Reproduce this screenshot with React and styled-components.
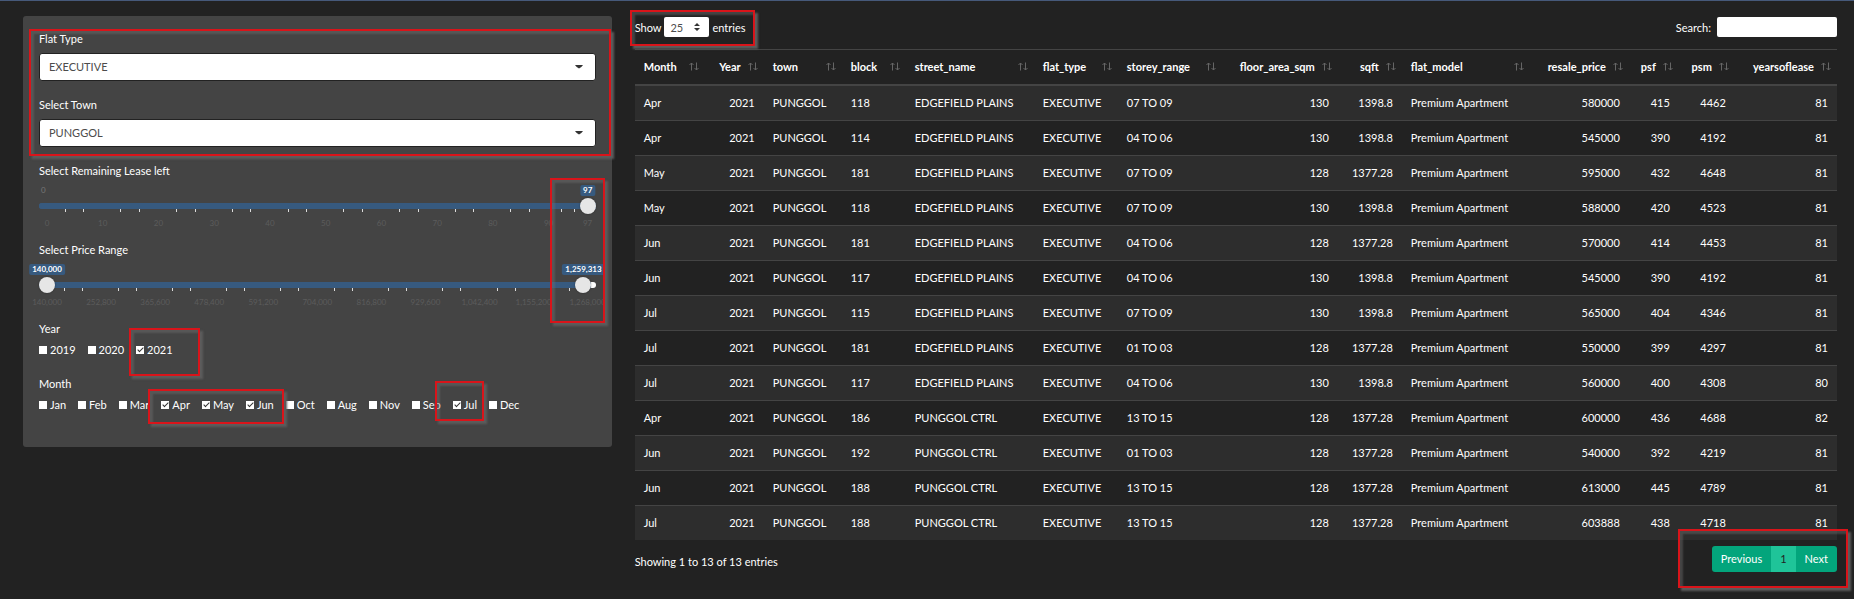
import React, { useId, useState } from "react";
import styled, { createGlobalStyle, css } from "styled-components";

const GlobalStyle = createGlobalStyle`
  *, *::before, *::after { box-sizing: border-box; }
  body {
    margin: 0;
    background: #222;
    color: #fff;
    font: 11px/17px Lato, "Liberation Sans", sans-serif;
  }
  input, select, button { font: inherit; }
`;

const Page = styled.div`
  border-top: 1px solid #46597a;
  padding: 15px 5px 26px 11px;
  display: grid;
  grid-template-columns: 1fr 2fr;
  align-items: start;
`;

const Column = styled.div`
  min-width: 0;
  padding: 0 12px;
`;

const MainColumn = styled(Column)`
  padding-left: 11px;
`;

const Sidebar = styled.form`
  background: #444;
  border-radius: 3px;
  padding: 14px 16px 17px;
`;

const Marked = styled.div`
  position: relative;
`;

const Mark = styled.span`
  position: absolute;
  z-index: 3;
  inset: ${(p) => p.$inset};
  border: 2px solid #d9141a;
  box-shadow: 3px 3px 2px #5c5c5c, inset 3px 3px 2px rgba(110, 110, 110, 0.45);
  pointer-events: none;
`;

const Field = styled.div`
  display: flex;
  flex-direction: column;
  gap: 6px;
  padding-bottom: 15px;
`;

const FieldLabel = styled.label`
  display: block;
`;

const SelectBox = styled.div`
  position: relative;
  display: flex;
`;

const Picker = styled.select`
  appearance: none;
  flex: 1;
  min-width: 0;
  height: 28px;
  padding: 0 24px 1px 9px;
  border: 1px solid #222;
  border-radius: 3px;
  background: #fff;
  color: #4c4c4c;
`;

const Caret = styled.svg`
  position: absolute;
  right: 13px;
  top: 12px;
  pointer-events: none;
`;

const SliderField = styled.div`
  padding-bottom: 13px;
`;

const TagRow = styled.div`
  position: relative;
  height: 11px;
  margin: 6px 8px 7px;
  font-size: 8px;
  line-height: 11px;
`;

const Tag = styled.output`
  position: absolute;
  transform: translateX(-50%);
  padding: 0 3px;
  border-radius: 2px;
  background: #375a7f;
  font-weight: 700;
  white-space: nowrap;
`;

const MinText = styled.span`
  color: #777;
  position: absolute;
  left: -6px;
`;

const Track = styled.div`
  position: relative;
  height: 6px;
  border-radius: 3px;
  background: linear-gradient(to right, #375a7f 50%, #fff 50%);
`;

const Fill = styled.div`
  height: 6px;
  border-radius: 3px 0 0 3px;
  background: #375a7f;
`;

const thumb = css`
  appearance: none;
  width: 16px;
  height: 16px;
  border: 0;
  border-radius: 50%;
  background: #e6e6e6;
  box-shadow: 0 0 2px rgba(0, 0, 0, 0.4);
  pointer-events: auto;
`;

const Range = styled.input`
  appearance: none;
  position: absolute;
  left: 0;
  top: -5px;
  width: 100%;
  height: 16px;
  margin: 0;
  background: none;
  pointer-events: none;
  &::-webkit-slider-thumb { ${thumb} }
  &::-moz-range-thumb { ${thumb} }
`;

const Scale = styled.div`
  display: flex;
  margin: 0 8px;
`;

const Segment = styled.div`
  flex: ${(p) => p.$span} 0 0;
  min-width: 0;
`;

const Ticks = styled.div`
  display: grid;
  grid-template-columns: repeat(3, 1fr);
  height: 3px;
  margin-bottom: 6px;
`;

const Tick = styled.i`
  border-right: 1px solid ${(p) => (p.$on ? "#ddd" : "transparent")};
`;

const ScaleText = styled.div`
  display: flex;
  justify-content: center;
  width: 0;
  font-size: 8px;
  line-height: 10px;
  color: #5c5c5c;
  white-space: nowrap;
`;

const Group = styled.fieldset`
  border: 0;
  margin: 0;
  min-width: 0;
  padding: 0 0 17px;
`;

const Legend = styled.legend`
  padding: 0;
  margin-bottom: 4px;
`;

const Choices = styled.div`
  display: flex;
  flex-wrap: wrap;
  column-gap: 12px;
`;

const Choice = styled.label`
  display: flex;
  align-items: center;
  gap: 3px;
`;

const ChoiceRun = styled(Choices)`
  position: relative;
`;

const Check = styled.input`
  appearance: none;
  position: relative;
  width: 8px;
  height: 8px;
  margin: 0;
  background: #fff;
  &:checked::after {
    content: "";
    position: absolute;
    left: 3px;
    top: 0;
    width: 3px;
    height: 6px;
    border: solid #333;
    border-width: 0 1px 1px 0;
    transform: rotate(45deg);
  }
`;

const Bar = styled.div`
  display: flex;
  justify-content: space-between;
  align-items: center;
`;

const TopBar = styled(Bar)`
  padding: 1px 0 12px;
`;

const FootBar = styled(Bar)`
  padding-top: 6px;
`;

const TableInfo = styled.span`
  padding-top: 4px;
`;

const InlineLabel = styled.label`
  position: relative;
  display: flex;
  align-items: center;
  gap: ${(p) => p.$gap}px;
`;

const LengthBox = styled.span`
  position: relative;
  display: flex;
`;

const LengthSelect = styled.select`
  appearance: none;
  width: 45px;
  height: 20px;
  padding: 0 0 0 6px;
  border: 0;
  border-radius: 2px;
  background: #fff;
  color: #4c4c4c;
`;

const LengthArrows = styled.svg`
  position: absolute;
  right: 9px;
  top: 6px;
  pointer-events: none;
`;

const SearchInput = styled.input`
  width: 120px;
  height: 20px;
  padding: 0 6px;
  border: 0;
  border-radius: 2px;
  background: #fff;
  color: #444;
`;

const Table = styled.table`
  width: 100%;
  table-layout: fixed;
  border-collapse: separate;
  border-spacing: 0;
`;

const Col = styled.col`
  width: ${(p) => p.$w}px;
`;

const Th = styled.th`
  position: relative;
  padding: 8px 23px 9px 9px;
  border: solid #444;
  border-width: 1px 0;
  text-align: ${(p) => (p.$num ? "right" : "left")};
  font-weight: 700;
  white-space: nowrap;
`;

const SortIcon = styled.svg`
  position: absolute;
  right: 6px;
  top: 12px;
`;

const Tr = styled.tr`
  &:nth-child(odd) { background: #2d2d2d; }
`;

const Td = styled.td`
  padding: 8px 9px 9px;
  border-top: 1px solid #444;
  text-align: ${(p) => (p.$num ? "right" : "left")};
  white-space: nowrap;
`;

const Pager = styled.nav`
  position: relative;
  display: flex;
`;

const PageButton = styled.button`
  height: 26px;
  padding: 0 9px 1px;
  border: 0;
  background: ${(p) => (p.$active ? "#1fc499" : "#03a57c")};
  color: ${(p) => (p.$active ? "#222" : "#fff")};
  &:first-of-type { border-radius: 3px 0 0 3px; }
  &:last-of-type { border-radius: 0 3px 3px 0; }
`;

const COLUMNS = [
  { name: "Month", w: 70 },
  { name: "Year", w: 59, num: true },
  { name: "town", w: 78 },
  { name: "block", w: 64 },
  { name: "street_name", w: 128 },
  { name: "flat_type", w: 84 },
  { name: "storey_range", w: 104 },
  { name: "floor_area_sqm", w: 116, num: true },
  { name: "sqft", w: 64, num: true },
  { name: "flat_model", w: 128 },
  { name: "resale_price", w: 99, num: true },
  { name: "psf", w: 50, num: true },
  { name: "psm", w: 56, num: true },
  { name: "yearsoflease", w: 102, num: true },
];

const EP = "EDGEFIELD PLAINS";
const PC = "PUNGGOL CTRL";
const row = (month, block, street, storey, area, price, psf, psm, lease) => [
  month, 2021, "PUNGGOL", block, street, "EXECUTIVE", storey, area,
  area === 130 ? "1398.8" : "1377.28", "Premium Apartment", price, psf, psm, lease,
];

const ROWS = [
  row("Apr", "118", EP, "07 TO 09", 130, 580000, 415, 4462, 81),
  row("Apr", "114", EP, "04 TO 06", 130, 545000, 390, 4192, 81),
  row("May", "181", EP, "07 TO 09", 128, 595000, 432, 4648, 81),
  row("May", "118", EP, "07 TO 09", 130, 588000, 420, 4523, 81),
  row("Jun", "181", EP, "04 TO 06", 128, 570000, 414, 4453, 81),
  row("Jun", "117", EP, "04 TO 06", 130, 545000, 390, 4192, 81),
  row("Jul", "115", EP, "07 TO 09", 130, 565000, 404, 4346, 81),
  row("Jul", "181", EP, "01 TO 03", 128, 550000, 399, 4297, 81),
  row("Jul", "117", EP, "04 TO 06", 130, 560000, 400, 4308, 80),
  row("Apr", "186", PC, "13 TO 15", 128, 600000, 436, 4688, 82),
  row("Jun", "192", PC, "01 TO 03", 128, 540000, 392, 4219, 81),
  row("Jun", "188", PC, "13 TO 15", 128, 613000, 445, 4789, 81),
  row("Jul", "188", PC, "13 TO 15", 128, 603888, 438, 4718, 81),
];

const LEASE_STOPS = [0, 10, 20, 30, 40, 50, 60, 70, 80, 90, 97];
const PRICE_STOPS = Array.from({ length: 11 }, (_, i) => 140000 + i * 112800);

function SelectField({ label, value }) {
  const id = useId();
  return (
    <Field>
      <FieldLabel htmlFor={id}>{label}</FieldLabel>
      <SelectBox>
        <Picker id={id} defaultValue={value}>
          <option>{value}</option>
        </Picker>
        <Caret width="8" height="4" viewBox="0 0 8 4" aria-hidden="true">
          <path d="M0 0h8Q6 3 4 3.500Q2 3 0 0z" fill="#333" />
        </Caret>
      </SelectBox>
    </Field>
  );
}

function SliderControl({ label, stops, initial }) {
  const id = useId();
  const [values, setValues] = useState(initial);
  const min = stops[0];
  const max = stops[stops.length - 1];
  const percent = (v) => `${((v - min) / (max - min)) * 100}%`;
  const change = (i) => (e) => {
    const next = [...values];
    next[i] = Number(e.target.value);
    setValues(next);
  };
  return (
    <SliderField>
      <FieldLabel htmlFor={id}>{label}</FieldLabel>
      <TagRow>
        {values.length === 1 && <MinText>{min}</MinText>}
        {values.map((v, i) => (
          <Tag key={i} style={{ left: percent(v) }}>{v.toLocaleString("en-US")}</Tag>
        ))}
      </TagRow>
      <Track>
        <Fill style={{ width: percent(values[values.length - 1]) }} />
        {values.map((v, i) => (
          <Range
            key={i}
            type="range"
            id={i === 0 ? id : undefined}
            aria-label={i === 0 ? undefined : `${label} upper limit`}
            min={min}
            max={max}
            value={v}
            onChange={change(i)}
          />
        ))}
      </Track>
      <Scale>
        {stops.map((s, i) => (
          <Segment key={s} $span={i < stops.length - 1 ? stops[i + 1] - s : 0}>
            <Ticks>
              <Tick $on={i < stops.length - 1} />
              <Tick $on={i < stops.length - 1} />
            </Ticks>
            <ScaleText>{s.toLocaleString("en-US")}</ScaleText>
          </Segment>
        ))}
      </Scale>
    </SliderField>
  );
}

function Choose({ name, checked }) {
  return (
    <Choice>
      <Check type="checkbox" defaultChecked={checked} />
      {name}
    </Choice>
  );
}

export default function App() {
  return (
    <>
      <GlobalStyle />
      <Page>
        <Column>
          <Sidebar>
            <Marked>
              <SelectField label="Flat Type" value="EXECUTIVE" />
              <SelectField label="Select Town" value="PUNGGOL" />
              <Mark $inset="-1px -15px 6px -10px" />
            </Marked>
            <Marked>
              <SliderControl label="Select Remaining Lease left" stops={LEASE_STOPS} initial={[97]} />
              <SliderControl label="Select Price Range" stops={PRICE_STOPS} initial={[140000, 1259313]} />
              <Mark $inset="16px -9px -3px calc(100% - 46px)" />
            </Marked>
            <Group>
              <Legend>Year</Legend>
              <Choices>
                <Choose name="2019" />
                <Choose name="2020" />
                <ChoiceRun>
                  <Choose name="2021" checked />
                  <Mark $inset="-13px -27px -18px -7px" />
                </ChoiceRun>
              </Choices>
            </Group>
            <Group>
              <Legend>Month</Legend>
              <Choices>
                <Choose name="Jan" />
                <Choose name="Feb" />
                <Choose name="Mar" />
                <ChoiceRun>
                  <Choose name="Apr" checked />
                  <Choose name="May" checked />
                  <Choose name="Jun" checked />
                  <Mark $inset="-7px -10px -11px -13px" />
                </ChoiceRun>
                <Choose name="Oct" />
                <Choose name="Aug" />
                <Choose name="Nov" />
                <Choose name="Sep" />
                <ChoiceRun>
                  <Choose name="Jul" checked />
                  <Mark $inset="-15px -7px -8px -18px" />
                </ChoiceRun>
                <Choose name="Dec" />
              </Choices>
            </Group>
          </Sidebar>
        </Column>
        <MainColumn>
          <TopBar>
            <InlineLabel $gap={3}>
              Show
              <LengthBox>
                <LengthSelect defaultValue="25">
                  <option>10</option>
                  <option>25</option>
                  <option>50</option>
                  <option>100</option>
                </LengthSelect>
                <LengthArrows width="6" height="8" viewBox="0 0 6 8" aria-hidden="true">
                  <path d="M0 3h6L3 0zM0 5h6L3 8z" fill="#333" />
                </LengthArrows>
              </LengthBox>
              entries
              <Mark $inset="-7px -9px -9px -5px" />
            </InlineLabel>
            <InlineLabel $gap={6}>
              Search:
              <SearchInput type="search" />
            </InlineLabel>
          </TopBar>
          <Table>
            <colgroup>
              {COLUMNS.map((c) => <Col key={c.name} $w={c.w} />)}
            </colgroup>
            <thead>
              <tr>
                {COLUMNS.map((c) => (
                  <Th key={c.name} $num={c.num} scope="col">
                    {c.name}
                    <SortIcon width="10" height="9" viewBox="0 0 10 9" aria-hidden="true">
                      <path d="M2.500 8.500V1M.5 3l2-2 2 2M7.500 .5V8M5.500 6l2 2 2-2" fill="none" stroke="#666" />
                    </SortIcon>
                  </Th>
                ))}
              </tr>
            </thead>
            <tbody>
              {ROWS.map((cells, r) => (
                <Tr key={r}>
                  {cells.map((cell, i) => (
                    <Td key={i} $num={COLUMNS[i].num}>{cell}</Td>
                  ))}
                </Tr>
              ))}
            </tbody>
          </Table>
          <FootBar>
            <TableInfo>Showing 1 to 13 of 13 entries</TableInfo>
            <Pager aria-label="Table pages">
              <PageButton type="button">Previous</PageButton>
              <PageButton type="button" $active aria-current="page">1</PageButton>
              <PageButton type="button">Next</PageButton>
              <Mark $inset="-17px -11px -16px -34px" />
            </Pager>
          </FootBar>
        </MainColumn>
      </Page>
    </>
  );
}
